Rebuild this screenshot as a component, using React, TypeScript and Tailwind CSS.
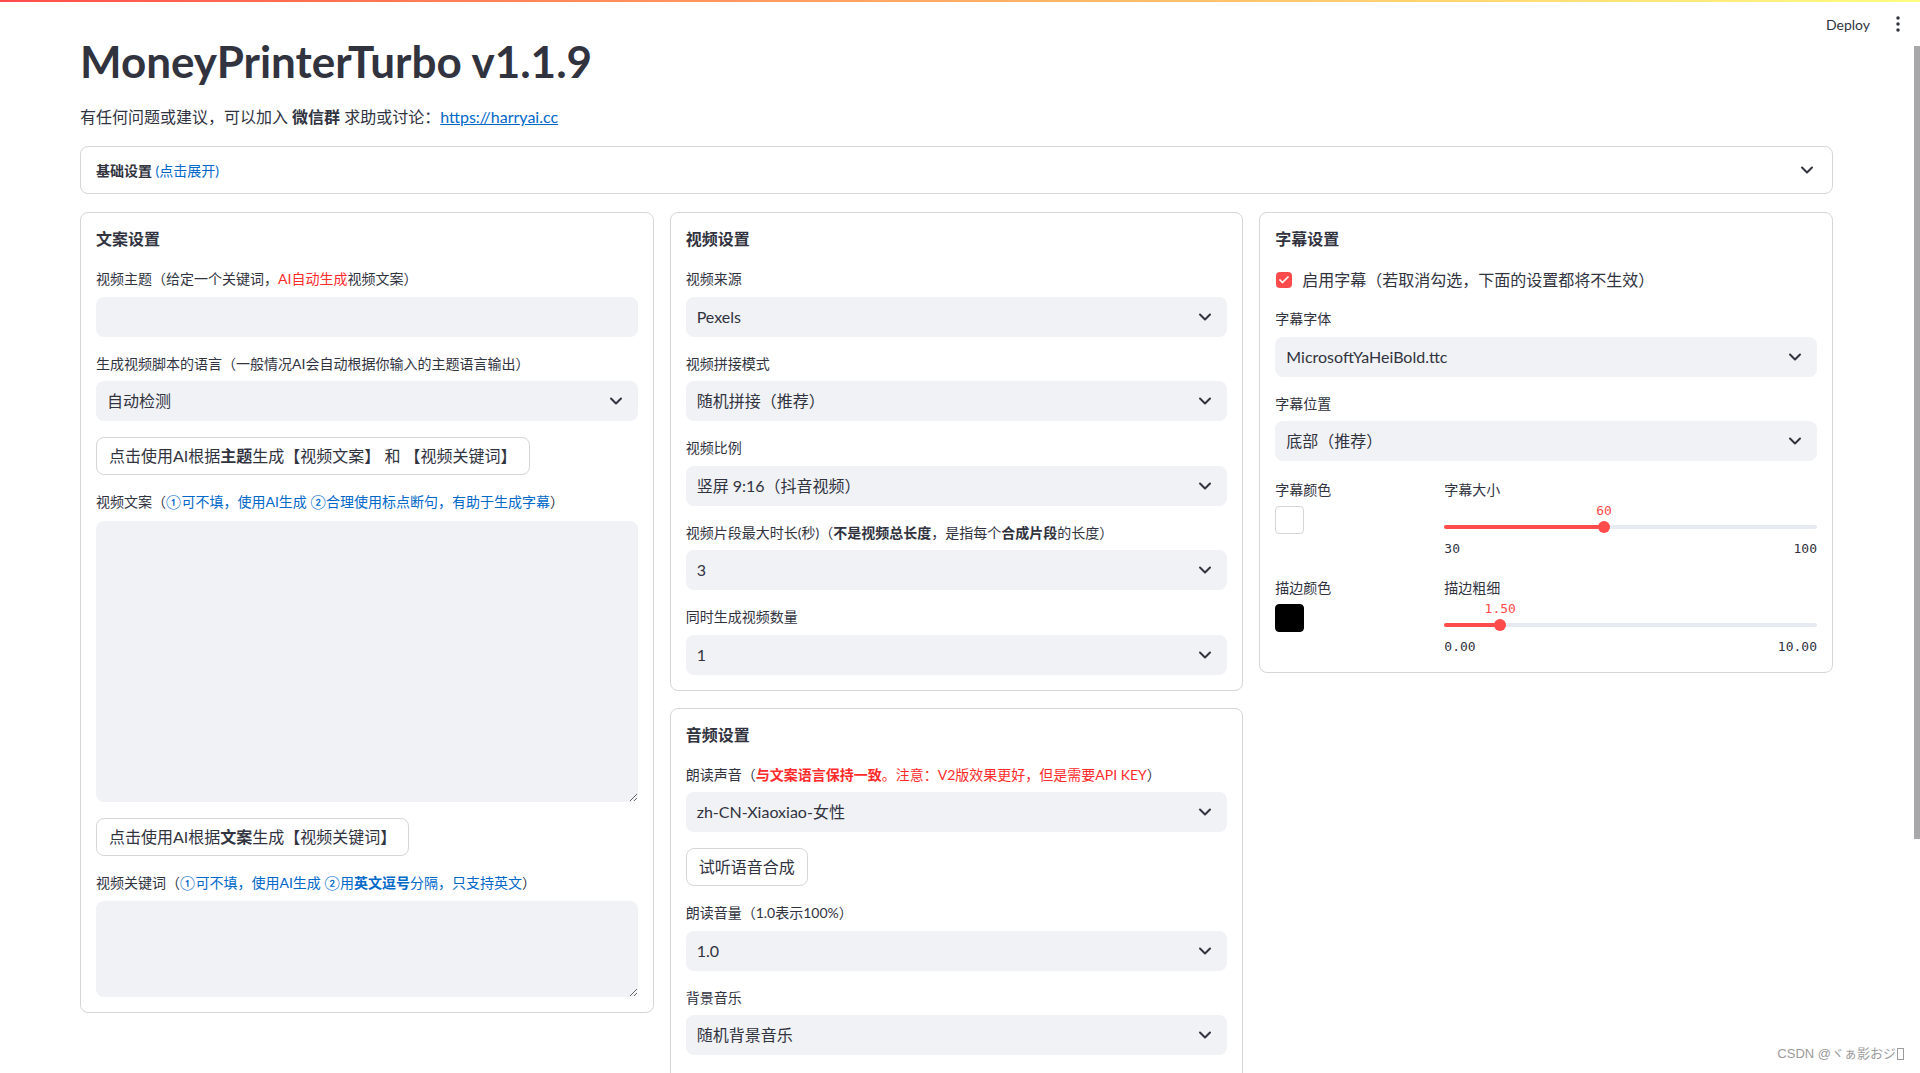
import React from "react";
import { ChevronDown, Check } from "lucide-react";

function Label({ children }: { children: React.ReactNode }) {
  return (
    <div className="mb-[6.5px] h-[22px] whitespace-nowrap text-[14px] leading-[22px] text-[#31333f]">
      {children}
    </div>
  );
}

function SelectBox({ value }: { value: string }) {
  return (
    <div className="flex h-[40px] items-center justify-between rounded-lg bg-[#f0f2f6] pl-[11px] pr-[12px] text-[16px] text-[#31333f]">
      <span className="whitespace-nowrap">{value}</span>
      <ChevronDown size={20} strokeWidth={2.4} className="text-[#31333f]" />
    </div>
  );
}

function SelectField({ label, value }: { label: React.ReactNode; value: string }) {
  return (
    <div>
      <Label>{label}</Label>
      <SelectBox value={value} />
    </div>
  );
}

function Panel({ children }: { children: React.ReactNode }) {
  return (
    <div className="flex flex-col gap-4 rounded-lg border border-[#d6d6d9] p-[15px]">{children}</div>
  );
}

function Heading({ children }: { children: React.ReactNode }) {
  return (
    <div className="h-[24px] text-[16px] font-bold leading-[22px] text-[#31333f]">{children}</div>
  );
}

function Button({ children }: { children: React.ReactNode }) {
  return (
    <div className="flex">
      <div className="flex h-[38px] items-center whitespace-pre rounded-lg border border-[#d6d6d9] bg-white px-[12px] text-[16px] text-[#31333f]">
        {children}
      </div>
    </div>
  );
}

function Slider({
  label,
  value,
  min,
  max,
  pct,
}: {
  label: string;
  value: string;
  min: string;
  max: string;
  pct: number;
}) {
  return (
    <div className="h-[82px]">
      <div className="mt-[2px] h-[22px] text-[14px] leading-[22px] text-[#31333f]">{label}</div>
      <div className="relative h-[37px]">
        <div className="absolute left-0 right-0 top-[24px] h-[4px] rounded-full bg-[#e6eaf1]" />
        <div
          className="absolute left-0 top-[24px] h-[4px] rounded-full bg-[#ff4b4b]"
          style={{ width: `${pct}%` }}
        />
        <div
          className="absolute top-[20px] -ml-[6px] h-[12px] w-[12px] rounded-full bg-[#ff4b4b]"
          style={{ left: `${pct}%` }}
        />
        <div
          className="absolute top-[2px] -translate-x-1/2 font-['DejaVu_Sans_Mono',monospace] text-[13px] leading-[16px] text-[#ff4b4b]"
          style={{ left: `${pct}%` }}
        >
          {value}
        </div>
      </div>
      <div className="flex h-[21px] justify-between font-['DejaVu_Sans_Mono',monospace] text-[13px] leading-[22px] text-[#31333f]">
        <span>{min}</span>
        <span>{max}</span>
      </div>
    </div>
  );
}

function ColorPick({ label, color }: { label: string; color: "white" | "black" }) {
  return (
    <div className="h-[82px]">
      <div className="mt-[2px] h-[22px] text-[14px] leading-[22px] text-[#31333f]">{label}</div>
      <div
        className={
          color === "white"
            ? "mt-[5px] h-[28px] w-[29px] rounded-[4px] border border-[#d6d6d9] bg-white"
            : "mt-[5px] h-[28px] w-[29px] rounded-[4px] border border-black bg-black"
        }
      />
    </div>
  );
}

const Blue = ({ children }: { children: React.ReactNode }) => (
  <span className="text-[#0068c9]">{children}</span>
);
const Red = ({ children }: { children: React.ReactNode }) => (
  <span className="text-[#ff2b2b]">{children}</span>
);

export default function App() {
  return (
    <div className="relative h-[1073px] w-[1920px] overflow-hidden bg-white font-['Lato','Noto_Sans_CJK_SC',sans-serif] text-[#31333f]">
      {/* header overlay */}
      <div className="absolute left-0 right-0 top-0 z-10">
        <div className="h-[2px] bg-linear-to-r from-[#ff4b4b] to-[#fffd80]" />
        <div className="flex h-[44px] items-center justify-end gap-[20px] pr-[14px]">
          <span className="text-[14px] text-[#31333f]">Deploy</span>
          <svg width="16" height="16" viewBox="0 0 16 16">
            <circle cx="8" cy="2" r="1.75" fill="#31333f" />
            <circle cx="8" cy="8" r="1.75" fill="#31333f" />
            <circle cx="8" cy="14" r="1.75" fill="#31333f" />
          </svg>
        </div>
      </div>

      {/* scrollbar thumb */}
      <div className="absolute right-0 top-[46px] z-10 h-[793px] w-[6px] bg-[#a8a8ab]" />

      <main className="pl-[80px] pr-[87px] pt-[35px]">
        <h1 className="h-[52px] text-[44px] font-bold leading-[52px] text-[#31333f]">MoneyPrinterTurbo v1.1.9</h1>
        <p className="mt-[17px] h-[26px] text-[16px] leading-[26px]">
          有任何问题或建议，可以加入 <b className="font-bold">微信群</b> 求助或讨论：
          <a className="text-[#0068c9] underline">https://harryai.cc</a>
        </p>

        <div className="mt-[16px] flex h-[48px] items-center justify-between rounded-lg border border-[#d6d6d9] px-[15px]">
          <span className="text-[14px]">
            <b className="font-bold">基础设置</b> <Blue>(点击展开)</Blue>
          </span>
          <ChevronDown size={20} strokeWidth={2.4} className="text-[#31333f]" />
        </div>

        <div className="mt-[18px] grid grid-cols-3 items-start gap-4">
          {/* left column */}
          <Panel>
            <Heading>文案设置</Heading>
            <div>
              <Label>
                视频主题（给定一个关键词，<Red>AI自动生成</Red>视频文案）
              </Label>
              <div className="h-[40px] rounded-lg bg-[#f0f2f6]" />
            </div>
            <SelectField label="生成视频脚本的语言（一般情况AI会自动根据你输入的主题语言输出）" value="自动检测" />
            <Button>
              点击使用AI根据<b className="font-bold">主题</b>生成【视频文案】 和 【视频关键词】
            </Button>
            <div>
              <div className="mb-[8px] h-[22px] whitespace-nowrap text-[14px] leading-[22px]">
                视频文案（<Blue>①可不填，使用AI生成 ②合理使用标点断句，有助于生成字幕</Blue>）
              </div>
              <textarea
                className="block h-[281px] w-full resize-y rounded-lg bg-[#f0f2f6] outline-none"
                defaultValue=""
              />
            </div>
            <Button>
              点击使用AI根据<b className="font-bold">文案</b>生成【视频关键词】
            </Button>
            <div>
              <div className="mb-[7px] h-[22px] whitespace-nowrap text-[14px] leading-[22px]">
                视频关键词（
                <Blue>
                  ①可不填，使用AI生成 ②用<b className="font-bold">英文逗号</b>分隔，只支持英文
                </Blue>
                ）
              </div>
              <textarea
                className="block h-[96px] w-full resize-y rounded-lg bg-[#f0f2f6] outline-none"
                defaultValue=""
              />
            </div>
          </Panel>

          {/* middle column */}
          <div className="flex flex-col gap-[17px]">
            <Panel>
              <Heading>视频设置</Heading>
              <SelectField label="视频来源" value="Pexels" />
              <SelectField label="视频拼接模式" value="随机拼接（推荐）" />
              <SelectField label="视频比例" value="竖屏 9:16（抖音视频）" />
              <SelectField
                label={
                  <>
                    视频片段最大时长(秒)（<b className="font-bold">不是视频总长度</b>，是指每个
                    <b className="font-bold">合成片段</b>的长度）
                  </>
                }
                value="3"
              />
              <SelectField label="同时生成视频数量" value="1" />
            </Panel>
            <Panel>
              <Heading>音频设置</Heading>
              <SelectField
                label={
                  <>
                    朗读声音（
                    <Red>
                      <b className="font-bold">与文案语言保持一致</b>。注意：V2版效果更好，但是需要API KEY
                    </Red>
                    ）
                  </>
                }
                value="zh-CN-Xiaoxiao-女性"
              />
              <Button>试听语音合成</Button>
              <SelectField label="朗读音量（1.0表示100%）" value="1.0" />
              <SelectField label="背景音乐" value="随机背景音乐" />
              <div className="h-[40px]" />
            </Panel>
          </div>

          {/* right column */}
          <Panel>
            <Heading>字幕设置</Heading>
            <div className="flex h-[24px] items-center gap-[10px]">
              <div className="ml-[1px] flex h-[16px] w-[16px] items-center justify-center rounded-[4px] bg-[#ff4b4b]">
                <Check size={12} strokeWidth={3.5} className="text-white" />
              </div>
              <span className="whitespace-nowrap text-[16px] leading-[24px]">
                启用字幕（若取消勾选，下面的设置都将不生效）
              </span>
            </div>
            <SelectField label="字幕字体" value="MicrosoftYaHeiBold.ttc" />
            <SelectField label="字幕位置" value="底部（推荐）" />
            <div className="grid grid-cols-[153px_1fr] gap-4">
              <ColorPick label="字幕颜色" color="white" />
              <Slider label="字幕大小" value="60" min="30" max="100" pct={((60 - 30) / 70) * 100} />
            </div>
            <div className="grid grid-cols-[153px_1fr] gap-4">
              <ColorPick label="描边颜色" color="black" />
              <Slider label="描边粗细" value="1.50" min="0.00" max="10.00" pct={15} />
            </div>
          </Panel>
        </div>
      </main>

      <div className="absolute bottom-[10px] right-[16px] z-10 flex items-center font-['Liberation_Sans','Noto_Sans_CJK_JP',sans-serif] text-[13px] leading-[18px] text-[#9b9b9b]">
        CSDN @ヾぁ影おジ
        <span className="ml-[1px] inline-block h-[12px] w-[7px] border border-[#9b9b9b]" />
      </div>
    </div>
  );
}
